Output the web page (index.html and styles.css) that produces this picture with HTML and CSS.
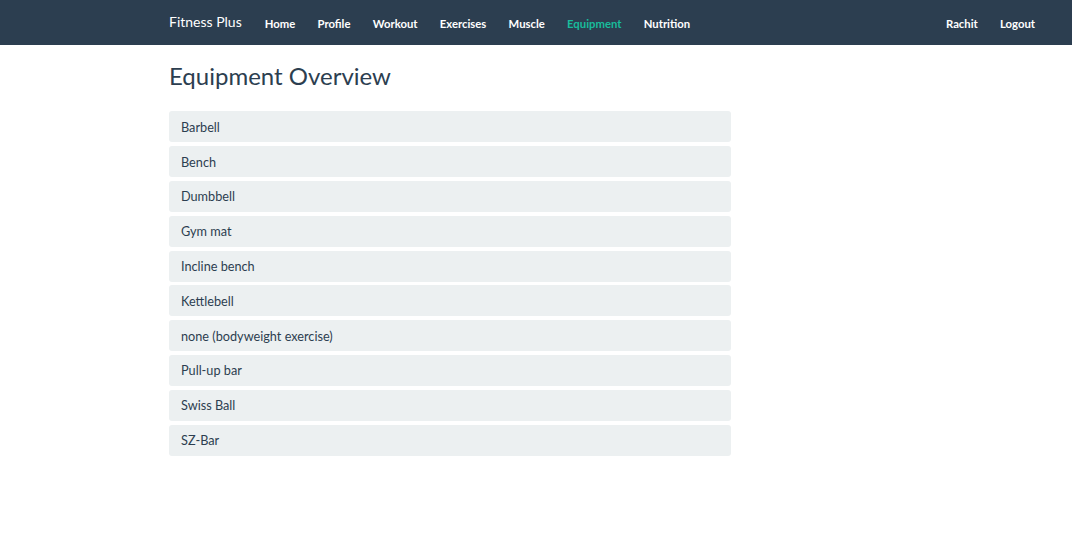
FILE: index.html
```html
<!DOCTYPE html>
<html>
<head>
<meta charset="utf-8">
<link rel="stylesheet" href="styles.css">
</head>
<body>
<nav class="navbar">
  <div class="nav-inner">
    <a class="brand" href="#">Fitness Plus</a>
    <ul class="nav-links">
      <li><a href="#">Home</a></li>
      <li><a href="#">Profile</a></li>
      <li><a href="#">Workout</a></li>
      <li><a href="#">Exercises</a></li>
      <li><a href="#">Muscle</a></li>
      <li><a href="#" class="active">Equipment</a></li>
      <li><a href="#">Nutrition</a></li>
    </ul>
    <ul class="nav-links nav-right">
      <li><a href="#">Rachit</a></li>
      <li><a href="#">Logout</a></li>
    </ul>
  </div>
</nav>
<main class="content">
  <h1 class="title">Equipment Overview</h1>
  <ul class="list">
    <li class="list-item">Barbell</li>
    <li class="list-item">Bench</li>
    <li class="list-item">Dumbbell</li>
    <li class="list-item">Gym mat</li>
    <li class="list-item">Incline bench</li>
    <li class="list-item">Kettlebell</li>
    <li class="list-item">none (bodyweight exercise)</li>
    <li class="list-item">Pull-up bar</li>
    <li class="list-item">Swiss Ball</li>
    <li class="list-item">SZ-Bar</li>
  </ul>
</main>
</body>
</html>
```

FILE: styles.css
```css
* { box-sizing: border-box; }
html, body { margin: 0; padding: 0; }
body {
  font-family: Lato, "Open Sans", sans-serif;
  color: #2c3e50;
  background: #fff;
}
a { text-decoration: none; }
.navbar {
  background: #2c3e50;
  height: 45px;
}
.nav-inner {
  height: 45px;
  display: flex;
  align-items: center;
  padding: 0 37px 2px 169px;
}
.brand {
  color: #fff;
  font-size: 14px;
  margin-right: 23px;
}
.nav-links {
  list-style: none;
  margin: 0;
  padding: 0;
  display: flex;
  gap: 22.3px;
}
.nav-links a {
  color: #fff;
  font-size: 11.3px;
  font-weight: 700;
}
.nav-links a.active { color: #18bc9c; }
.nav-right { margin-left: auto; }
.content {
  padding-left: 169px;
  width: 731px;
}
.title {
  font-size: 24px;
  font-weight: 400;
  margin: 18px 0 22px;
  line-height: 1.1;
}
.list {
  list-style: none;
  margin: 0;
  padding: 0;
  display: flex;
  flex-direction: column;
  gap: 3.8px;
}
.list-item {
  background: #ecf0f1;
  border-radius: 3px;
  height: 31px;
  padding: 0 12px;
  display: flex;
  align-items: center;
  font-size: 12.7px;
  color: #2c3e50;
}
```
